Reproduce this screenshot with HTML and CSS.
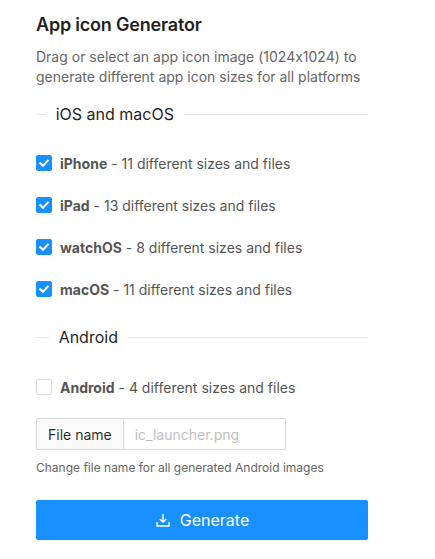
FILE: index.html
```html
<!DOCTYPE html>
<html>
<head>
<meta charset="utf-8">
<link rel="stylesheet" href="styles.css">
</head>
<body>
<div class="panel">
  <h1 class="title">App icon Generator</h1>
  <p class="desc">Drag or select an app icon image (1024x1024) to generate different app icon sizes for all platforms</p>

  <div class="divider divider-first"><span class="divider-text">iOS and macOS</span></div>
  <div class="options">
    <label class="option"><span class="box checked"><svg viewBox="0 0 16 16"><path d="M4.2 8.2 L7 10.8 L11.8 5.6" fill="none" stroke="#fff" stroke-width="2" stroke-linecap="square"/></svg></span><span class="label"><b>iPhone</b> - 11 different sizes and files</span></label>
    <label class="option"><span class="box checked"><svg viewBox="0 0 16 16"><path d="M4.2 8.2 L7 10.8 L11.8 5.6" fill="none" stroke="#fff" stroke-width="2" stroke-linecap="square"/></svg></span><span class="label"><b>iPad</b> - 13 different sizes and files</span></label>
    <label class="option"><span class="box checked"><svg viewBox="0 0 16 16"><path d="M4.2 8.2 L7 10.8 L11.8 5.6" fill="none" stroke="#fff" stroke-width="2" stroke-linecap="square"/></svg></span><span class="label"><b>watchOS</b> - 8 different sizes and files</span></label>
    <label class="option"><span class="box checked"><svg viewBox="0 0 16 16"><path d="M4.2 8.2 L7 10.8 L11.8 5.6" fill="none" stroke="#fff" stroke-width="2" stroke-linecap="square"/></svg></span><span class="label"><b>macOS</b> - 11 different sizes and files</span></label>
  </div>

  <div class="divider divider-second"><span class="divider-text">Android</span></div>
  <div class="options options-android">
    <label class="option"><span class="box"></span><span class="label"><b>Android</b> - 4 different sizes and files</span></label>
  </div>

  <div class="input-group">
    <span class="addon">File name</span>
    <span class="input">ic_launcher.png</span>
  </div>
  <p class="help">Change file name for all generated Android images</p>

  <button class="btn">
    <svg class="btn-icon" viewBox="0 0 16 16"><path d="M8 2 V10 M4.8 7 L8 10.2 L11.2 7 M2 10 V14 H14 V10" fill="none" stroke="#fff" stroke-width="1.4"/></svg>
    <span>Generate</span>
  </button>
</div>
</body>
</html>
```
FILE: styles.css
```css
* { box-sizing: border-box; }
body {
  margin: 0;
  background: #fff;
  font-family: Inter, "Noto Sans", sans-serif;
  font-feature-settings: "calt" 0;
  color: rgba(0,0,0,0.85);
}
.panel {
  width: 332px;
  margin-left: 36px;
  padding-top: 12px;
  display: flex;
  flex-direction: column;
}
.title {
  margin: 0;
  font-size: 18px;
  font-weight: 600;
  line-height: 26px;
  color: #1f1f1f;
  letter-spacing: -0.2px;
}
.desc {
  margin: 9px 0 0;
  font-size: 14px;
  line-height: 20px;
  color: #666;
}
.divider {
  display: flex;
  align-items: center;
  height: 24px;
  font-size: 16px;
  color: #1f1f1f;
}
.divider-first { margin-top: 15px; }
.divider-second { margin-top: 25px; }
.divider::before {
  content: "";
  width: 5%;
  border-top: 1px solid #e8e8e8;
}
.divider::after {
  content: "";
  width: 95%;
  border-top: 1px solid #e8e8e8;
}
.divider-text {
  flex: none;
  white-space: nowrap;
  padding: 0 10px;
}
.options {
  display: flex;
  flex-direction: column;
  gap: 20px;
  margin-top: 26px;
}
.options-android { margin-top: 27px; }
.option {
  display: flex;
  align-items: center;
  height: 22px;
  font-size: 14px;
  color: #555;
}
.box {
  width: 16px;
  height: 16px;
  border: 1px solid #d9d9d9;
  border-radius: 2px;
  background: #fff;
  display: flex;
  align-items: center;
  justify-content: center;
  flex: none;
}
.box.checked {
  background: #1890ff;
  border-color: #1890ff;
}
.box svg { width: 16px; height: 16px; flex: none; }
.label {
  padding-left: 8px;
}
.label b { font-weight: 700; color: #555; }
.input-group {
  display: flex;
  width: 250px;
  height: 32px;
  margin-top: 20px;
  font-size: 14px;
}
.addon {
  display: flex;
  align-items: center;
  padding: 0 11px;
  white-space: nowrap;
  background: #fafafa;
  border: 1px solid #d9d9d9;
  border-radius: 2px 0 0 2px;
  color: rgba(0,0,0,0.85);
}
.input {
  flex: 1;
  display: flex;
  align-items: center;
  padding: 0 11px;
  border: 1px solid #d9d9d9;
  border-left: none;
  border-radius: 0 2px 2px 0;
  color: #bfbfbf;
  white-space: nowrap;
}
.help {
  margin: 9px 0 0;
  font-size: 12px;
  line-height: 18px;
  color: #666;
}
.btn {
  margin-top: 23px;
  height: 40px;
  border: none;
  border-radius: 2px;
  background: #1890ff;
  color: #fff;
  font-family: inherit;
  font-size: 16px;
  display: flex;
  align-items: center;
  justify-content: center;
  gap: 9px;
  padding: 0;
}
.btn-icon { width: 16px; height: 16px; }
```
